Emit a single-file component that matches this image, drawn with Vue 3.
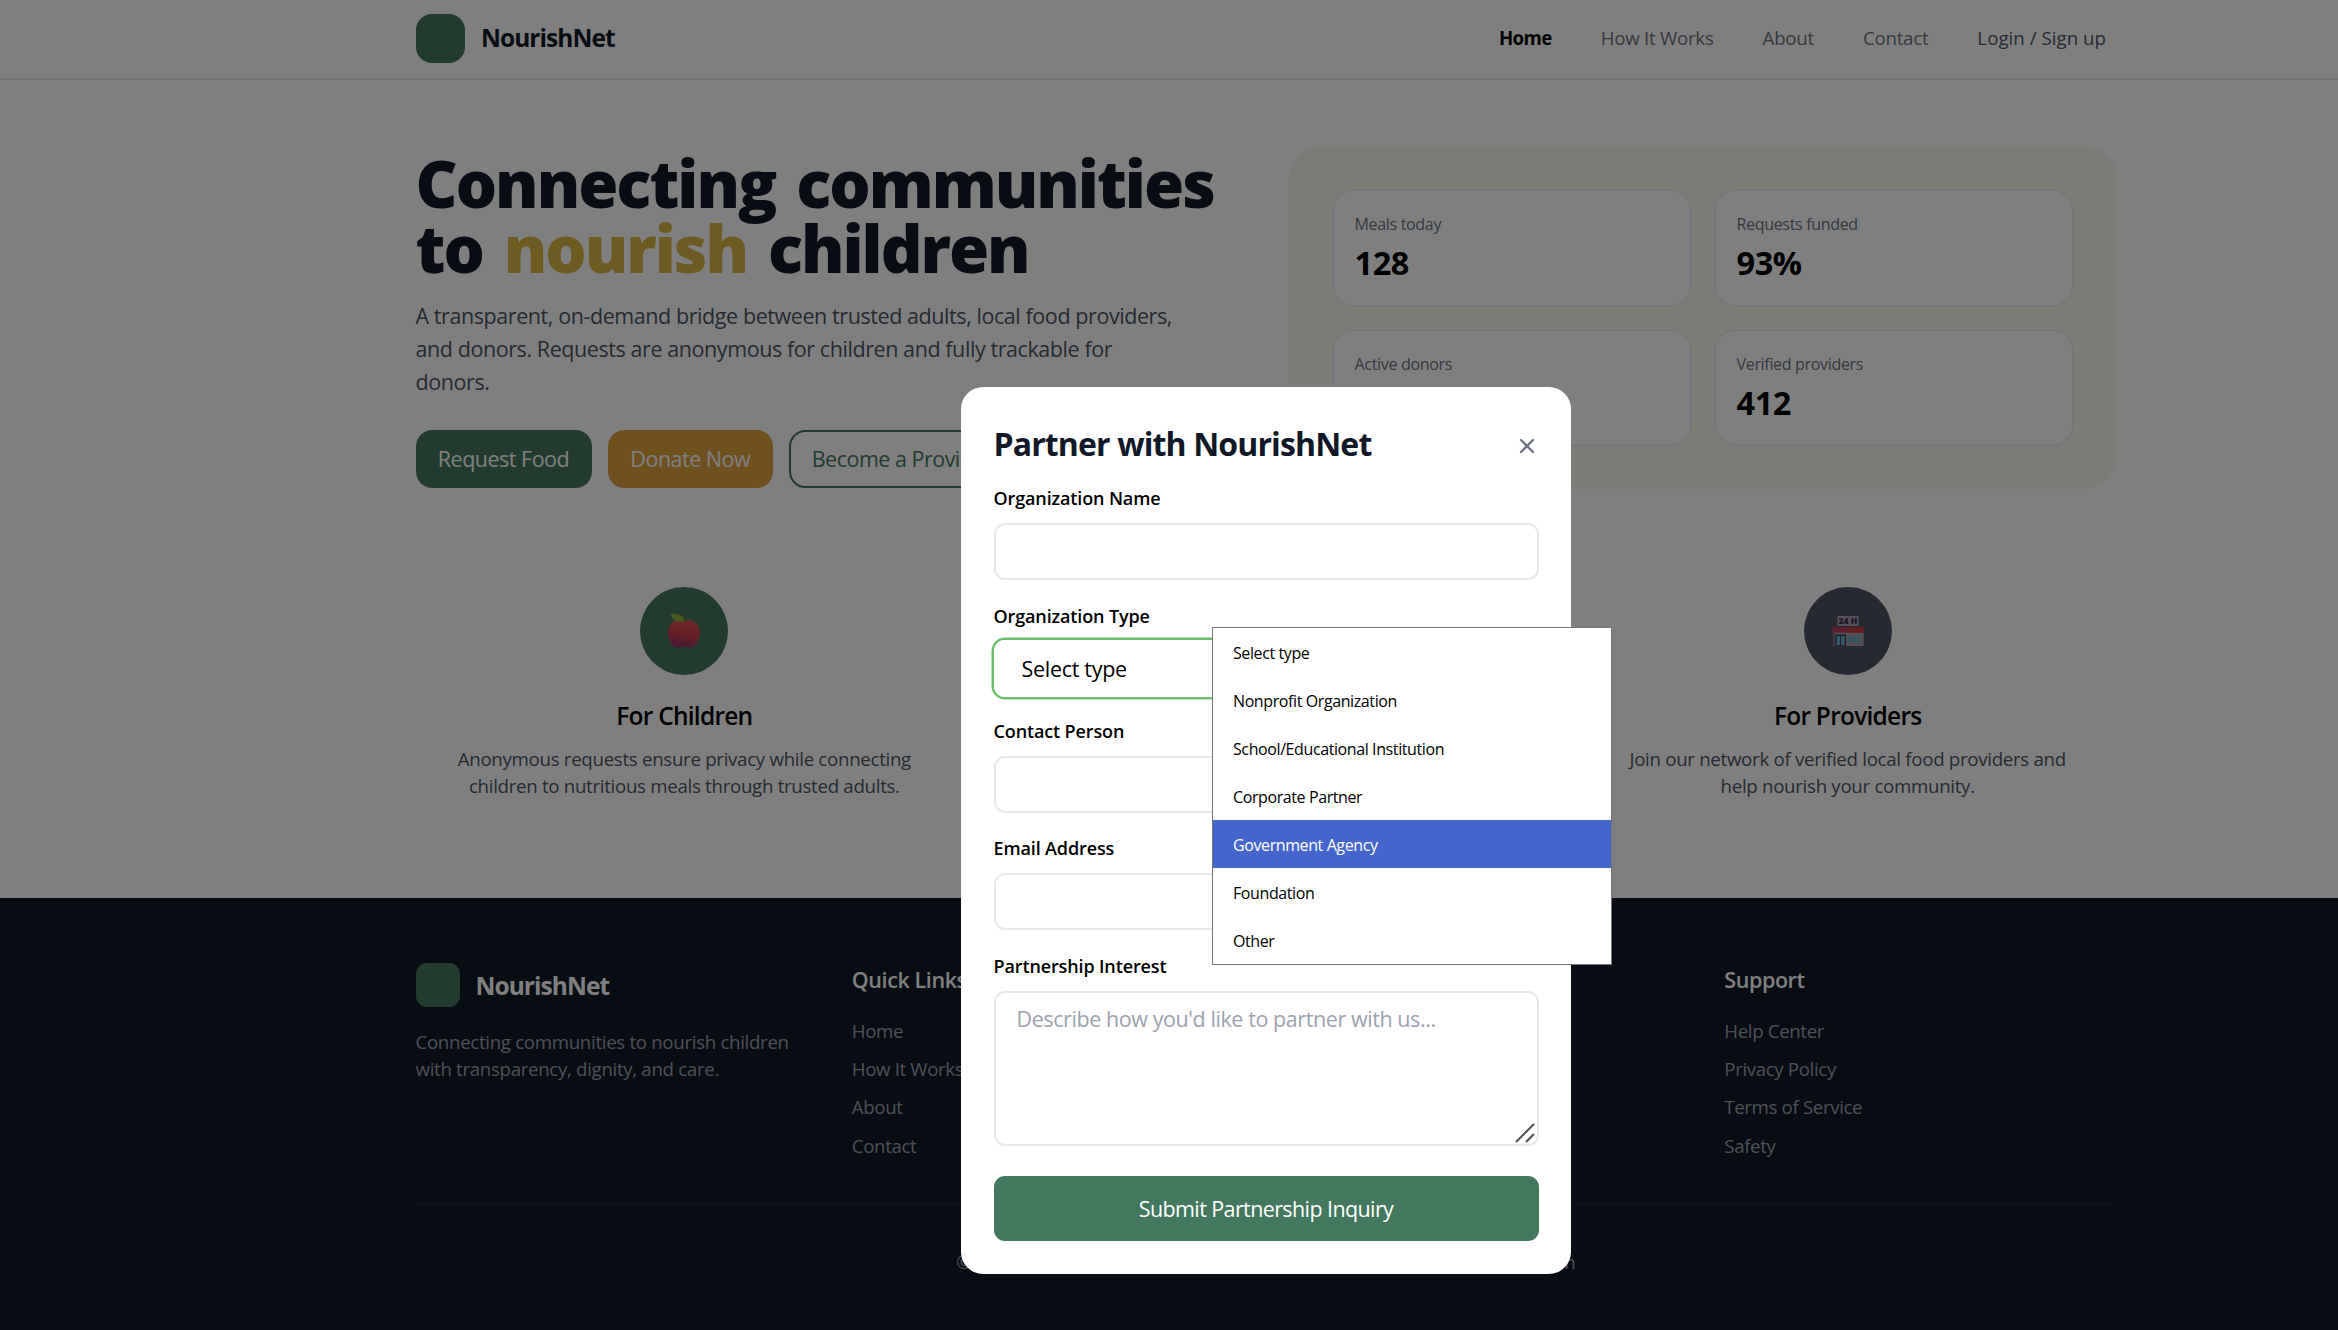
<script setup>
const nav = ['Home', 'How It Works', 'About', 'Contact', 'Login / Sign up']
const stats = [
  { label: 'Meals today', value: '128' },
  { label: 'Requests funded', value: '93%' },
  { label: 'Active donors', value: '276' },
  { label: 'Verified providers', value: '412' },
]
const quickLinks = ['Home', 'How It Works', 'About', 'Contact']
const supportLinks = ['Help Center', 'Privacy Policy', 'Terms of Service', 'Safety']
const types = [
  'Select type',
  'Nonprofit Organization',
  'School/Educational Institution',
  'Corporate Partner',
  'Government Agency',
  'Foundation',
  'Other',
]
const highlighted = 4
</script>

<template>
  <div class="page">
    <header class="header">
      <div class="container header-row">
        <div class="brand">
          <span class="brand-mark"></span>
          <span class="brand-name">NourishNet</span>
        </div>
        <nav class="nav">
          <a v-for="(item, i) in nav" :key="item" :class="{ active: i === 0, login: i === 4 }">{{ item }}</a>
        </nav>
      </div>
    </header>

    <section class="container hero">
      <div class="hero-copy">
        <h1>Connecting communities<br />to <span class="gold">nourish</span> children</h1>
        <p>
          A transparent, on-demand bridge between trusted adults, local food providers,<br />
          and donors. Requests are anonymous for children and fully trackable for<br />
          donors.
        </p>
        <div class="actions">
          <button class="btn green">Request Food</button>
          <button class="btn orange">Donate Now</button>
          <button class="btn outline">Become a Provider</button>
        </div>
      </div>
      <div class="panel">
        <div v-for="s in stats" :key="s.label" class="stat">
          <div class="stat-label">{{ s.label }}</div>
          <div class="stat-value">{{ s.value }}</div>
        </div>
      </div>
    </section>

    <section class="container features">
      <article class="feature">
        <div class="circle circle-green">
          <svg class="apple" width="34" height="36" viewBox="0 0 34 36">
            <defs>
              <linearGradient id="apple" x1="0.6" y1="0" x2="0.4" y2="1">
                <stop offset="0" stop-color="#dc5552" />
                <stop offset="0.55" stop-color="#c83f4c" />
                <stop offset="1" stop-color="#92306c" />
              </linearGradient>
            </defs>
            <path
              d="M17 8.200c-2.400-1.200-6-2-9.200-.2C3.200 10 1 14.500 1 19.600 1 26 4.500 33.500 9.500 34.500c3 .6 5-.5 7.500-.5s4.500 1.100 7.500.5c5-1 8.500-8 8.500-14.900 0-5.100-2.200-9.600-6.800-11.600-3.200-1.800-6.800-1-9.200.2z"
              fill="url(#apple)"
            />
            <path d="M3.500 1.200C10 .6 16 1 17.800 8.500 11 9.500 6 8.500 3.500 1.200z" fill="#93ac3c" />
            <path d="M14.500 2.500c2.200 1.400 3.400 3.500 3.500 6.500" fill="none" stroke="#6e8c2c" stroke-width="1.400" />
          </svg>
        </div>
        <h3>For Children</h3>
        <p>Anonymous requests ensure privacy while connecting<br />children to nutritious meals through trusted adults.</p>
      </article>
      <article class="feature">
        <div class="circle circle-orange"></div>
        <h3>For Donors</h3>
        <p>Fund meals directly and follow<br />every contribution.</p>
      </article>
      <article class="feature">
        <div class="circle circle-slate">
          <svg width="34" height="32" viewBox="0 0 34 32">
            <path d="M10 9v4M23 9v4" stroke="#4c3a5c" stroke-width="1.200" />
            <rect x="6.500" y="1" width="21" height="10" rx="0.600" fill="#aca0b4" />
            <text x="17" y="9" text-anchor="middle" font-size="8.600" class="sign">24 H</text>
            <rect x="2.200" y="15" width="30.500" height="16" fill="#a59cab" />
            <rect x="2.200" y="15" width="1.800" height="16" fill="#796d85" />
            <rect x="1" y="12" width="32" height="5.600" fill="#c03a5c" />
            <path d="M17 12h16v5.600H17z" fill="#c53942" />
            <rect x="4.300" y="19.500" width="10.600" height="11.500" fill="#403058" />
            <rect x="5.600" y="21" width="3.500" height="9.300" fill="#62b4d0" />
            <rect x="10.100" y="21" width="3.500" height="9.300" fill="#62b4d0" />
            <rect x="17.500" y="22" width="11" height="5" fill="#5cabc0" />
          </svg>
        </div>
        <h3>For Providers</h3>
        <p>Join our network of verified local food providers and<br />help nourish your community.</p>
      </article>
    </section>

    <footer class="footer">
      <div class="container">
        <div class="footer-grid">
          <div>
            <div class="brand footer-brand">
              <span class="brand-mark small"></span>
              <span class="brand-name light">NourishNet</span>
            </div>
            <p class="tagline">Connecting communities to nourish children<br />with transparency, dignity, and care.</p>
          </div>
          <div>
            <h4>Quick Links</h4>
            <ul><li v-for="l in quickLinks" :key="l">{{ l }}</li></ul>
          </div>
          <div>
            <h4>Get Involved</h4>
            <ul><li>Donate</li><li>Partner</li></ul>
          </div>
          <div>
            <h4>Support</h4>
            <ul><li v-for="l in supportLinks" :key="l">{{ l }}</li></ul>
          </div>
        </div>
        <div class="copyright">© 2024 NourishNet. All rights reserved. Built with care for our children</div>
      </div>
    </footer>

    <div class="overlay">
      <form class="modal" @submit.prevent>
        <div class="modal-head">
          <h2>Partner with NourishNet</h2>
          <svg class="close" width="16" height="16" viewBox="0 0 16 16">
            <path d="M2 2l12 12M14 2L2 14" stroke="#6b7280" stroke-width="2.300" stroke-linecap="round" />
          </svg>
        </div>
        <label>Organization Name</label>
        <div class="field"></div>
        <label>Organization Type</label>
        <div class="field select">Select type</div>
        <label>Contact Person</label>
        <div class="field"></div>
        <label>Email Address</label>
        <div class="field"></div>
        <label>Partnership Interest</label>
        <div class="field area">
          <span>Describe how you'd like to partner with us...</span>
          <svg class="grip" width="20" height="20" viewBox="0 0 20 20">
            <path d="M1 19L19 1M11 19l8-8" stroke="#555" stroke-width="2.200" />
          </svg>
        </div>
        <button class="submit">Submit Partnership Inquiry</button>
        <div class="menu">
          <div v-for="(t, i) in types" :key="t" class="option" :class="{ on: i === highlighted }">{{ t }}</div>
        </div>
      </form>
    </div>
  </div>
</template>

<style>
body {
  margin: 0;
  overflow: hidden;
}
</style>

<style scoped>
* {
  box-sizing: border-box;
}
.page {
  position: relative;
  width: 2338px;
  height: 1330px;
  overflow: hidden;
  background: #fff;
  color: #000;
  font-family: 'Open Sans', 'Noto Sans', sans-serif;
  font-size: 18.7px;
  line-height: 27.5px;
  letter-spacing: -0.32px;
  white-space: nowrap;
}
h1, h2, h3, h4, p, ul {
  margin: 0;
  padding: 0;
}
ul {
  list-style: none;
}
button {
  border: 0;
  font: inherit;
  letter-spacing: inherit;
  padding: 0;
}
.container {
  width: 1701px;
  margin-left: 415.5px;
}
.header {
  height: 80px;
  border-bottom: 2px solid #e5e7eb;
}
.header-row {
  display: flex;
  justify-content: space-between;
  align-items: center;
  height: 76px;
}
.brand {
  display: flex;
  align-items: center;
  gap: 16.5px;
}
.brand-mark {
  width: 49px;
  height: 49px;
  border-radius: 16px;
  background: #42785d;
}
.brand-mark.small {
  width: 44px;
  height: 44px;
  border-radius: 11px;
}
.brand-name {
  font-size: 24.5px;
  font-weight: 700;
  letter-spacing: -0.95px;
  color: #111827;
}
.brand-name.light {
  color: #fff;
  padding-top: 1px;
}
.footer-brand {
  gap: 16px;
}
.nav {
  display: flex;
  gap: 49px;
  padding-right: 10.5px;
  color: #6b7280;
  letter-spacing: -0.25px;
}
.nav .active {
  color: #000;
  font-weight: 700;
  letter-spacing: -0.65px;
}
.nav .login {
  color: #4b5563;
  letter-spacing: 0.03px;
}
.hero {
  display: flex;
  justify-content: space-between;
  margin-top: 66px;
  height: 343px;
}
.hero-copy {
  padding-top: 5px;
}
h1 {
  font-size: 65px;
  line-height: 65px;
  font-weight: 800;
  letter-spacing: -2px;
  word-spacing: 6px;
  color: #111827;
}
.gold {
  color: #dcb644;
}
.hero-copy p {
  margin-top: 17.5px;
  font-size: 21.5px;
  line-height: 33px;
  letter-spacing: -0.42px;
  color: #4b5563;
}
.actions {
  display: flex;
  gap: 16.5px;
  margin-top: 32.5px;
}
.btn {
  height: 58px;
  border-radius: 16.5px;
  font-size: 21.5px;
  letter-spacing: -0.5px;
  color: #fff;
}
.green {
  width: 176px;
  background: #42785d;
}
.orange {
  width: 164.5px;
  background: #e0a03e;
}
.outline {
  width: 226px;
  background: #fff;
  color: #42785d;
  border: 2px solid #42785d;
}
.panel {
  width: 828px;
  height: 343px;
  padding: 43px;
  border-radius: 33px;
  background: #faf6ea;
  display: grid;
  grid-template-columns: 1fr 1fr;
  grid-auto-rows: 117.5px;
  gap: 22px;
}
.stat {
  border: 2px solid #edeff2;
  border-radius: 22px;
  background: #fff;
  padding: 22px 21px;
}
.stat-label {
  font-size: 16px;
  line-height: 22px;
  color: #6b7280;
}
.stat-value {
  margin-top: 6px;
  font-size: 32.5px;
  line-height: 44px;
  font-weight: 700;
  letter-spacing: -0.4px;
}
.features {
  display: grid;
  grid-template-columns: repeat(3, 1fr);
  gap: 44px;
  margin-top: 98px;
  height: 311px;
  text-align: center;
}
.circle {
  width: 88px;
  height: 88px;
  margin: 0 auto;
  border-radius: 50%;
  display: flex;
  align-items: center;
  justify-content: center;
}
.circle-green {
  background: #42785d;
}
.circle-orange {
  background: #e0a03e;
}
.circle-slate {
  background: #4b5563;
}
.sign {
  font-family: 'Open Sans', sans-serif;
  font-weight: 800;
  fill: #3a2850;
  letter-spacing: 0;
}
h3 {
  margin-top: 21.5px;
  font-size: 24.5px;
  line-height: 38px;
  font-weight: 600;
  letter-spacing: -0.75px;
}
.feature p {
  margin-top: 10px;
  color: #4b5563;
  letter-spacing: -0.3px;
}
.footer {
  height: 432px;
  padding-top: 65px;
  background: #111827;
  color: #9ca3af;
}
.footer-grid {
  display: grid;
  grid-template-columns: repeat(4, 1fr);
  gap: 44px;
  height: 240px;
}
.tagline {
  margin-top: 20.5px;
}
h4 {
  font-size: 21.5px;
  line-height: 33px;
  font-weight: 600;
  letter-spacing: -0.4px;
  color: #fff;
}
.footer ul {
  margin-top: 20.5px;
  display: flex;
  flex-direction: column;
  gap: 10.9px;
  letter-spacing: -0.36px;
}
.copyright {
  border-top: 2px solid #1b2230;
  padding-top: 43px;
  text-align: center;
  letter-spacing: 0.13px;
}
.overlay {
  position: absolute;
  inset: 0;
  background: rgba(0, 0, 0, 0.5);
}
.modal {
  position: absolute;
  left: 961px;
  top: 387px;
  width: 610px;
  height: 887px;
  padding: 33.5px 32.5px 0;
  border-radius: 22px;
  background: #fff;
  display: flex;
  flex-direction: column;
}
.modal-head {
  display: flex;
  justify-content: space-between;
  align-items: flex-start;
  margin-bottom: -2px;
}
h2 {
  font-size: 32px;
  line-height: 45px;
  height: 44px;
  font-weight: 700;
  letter-spacing: -0.87px;
  color: #111827;
}
.close {
  margin: 17px 3.5px 0 0;
}
label {
  margin-top: 22.5px;
  font-size: 18px;
  line-height: 27px;
  font-weight: 600;
  letter-spacing: -0.13px;
}
.field {
  flex: none;
  margin-top: 11px;
  height: 57px;
  border: 2px solid #e8e8ec;
  border-radius: 11px;
}
.select {
  margin: 10.5px 0 -2px;
  border-color: #fff;
  box-shadow: 0 0 0 2.5px #68c06c;
  padding-left: 26px;
  font-size: 21.5px;
  line-height: 54px;
  letter-spacing: -0.3px;
}
.area {
  position: relative;
  height: 155px;
  padding: 9.5px 21px;
  font-size: 21.5px;
  line-height: 33px;
  letter-spacing: -0.42px;
  color: #9ca3af;
}
.grip {
  position: absolute;
  right: 1.5px;
  bottom: 1px;
}
.submit {
  flex: none;
  margin-top: 30px;
  height: 65.5px;
  border-radius: 11px;
  background: #42785d;
  color: #fff;
  font-size: 21.5px;
  font-weight: 500;
  letter-spacing: -0.6px;
}
.menu {
  position: absolute;
  left: 251px;
  top: 240px;
  width: 400px;
  border: 1px solid #767676;
  background: #fff;
}
.option {
  height: 48px;
  line-height: 51px;
  padding-left: 20px;
  font-size: 16px;
  letter-spacing: -0.4px;
}
.option.on {
  background: #4466cc;
  color: #fff;
}
</style>
